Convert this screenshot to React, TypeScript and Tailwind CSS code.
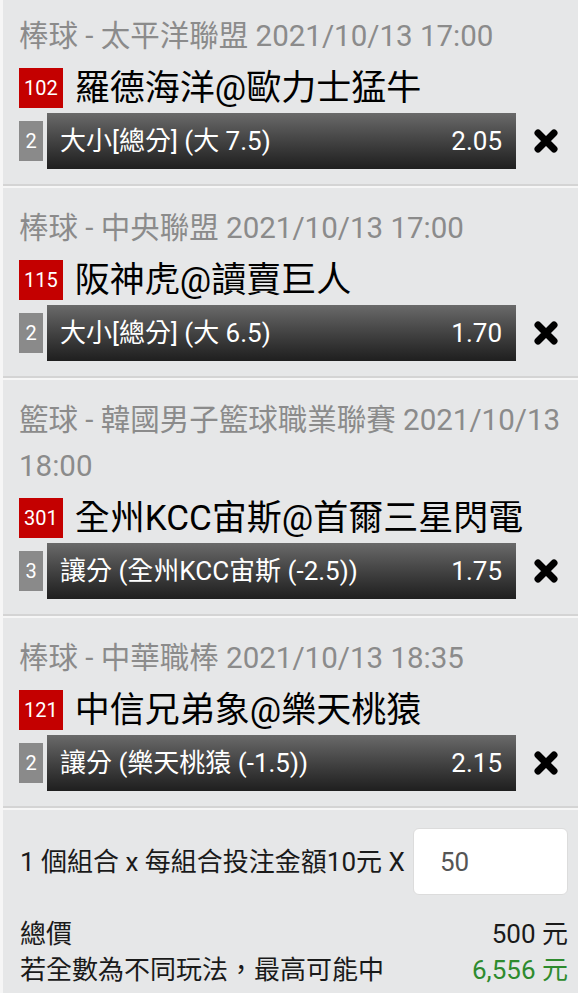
import React from 'react';

type Bet = {
  header: string;
  no: string;
  teams: string;
  leg: string;
  play: string;
  odds: string;
};

const BETS: Bet[] = [
  {
    header: '棒球 - 太平洋聯盟 2021/10/13 17:00',
    no: '102',
    teams: '羅德海洋@歐力士猛牛',
    leg: '2',
    play: '大小[總分] (大 7.5)',
    odds: '2.05',
  },
  {
    header: '棒球 - 中央聯盟 2021/10/13 17:00',
    no: '115',
    teams: '阪神虎@讀賣巨人',
    leg: '2',
    play: '大小[總分] (大 6.5)',
    odds: '1.70',
  },
  {
    header: '籃球 - 韓國男子籃球職業聯賽 2021/10/13 18:00',
    no: '301',
    teams: '全州KCC宙斯@首爾三星閃電',
    leg: '3',
    play: '讓分 (全州KCC宙斯 (-2.5))',
    odds: '1.75',
  },
  {
    header: '棒球 - 中華職棒 2021/10/13 18:35',
    no: '121',
    teams: '中信兄弟象@樂天桃猿',
    leg: '2',
    play: '讓分 (樂天桃猿 (-1.5))',
    odds: '2.15',
  },
];

const CloseIcon = () => (
  <svg width="24" height="24" viewBox="0 0 24 24" className="shrink-0">
    <path d="M4 4 L20 20 M20 4 L4 20" stroke="#000" strokeWidth="7" strokeLinecap="round" />
  </svg>
);

const BetCard = ({ bet }: { bet: Bet }) => (
  <div className="bg-[#e6e7e8] border-b-2 border-[#d4d4d4] mb-[2px] pl-[16px] pr-[10px] pt-[17px] pb-[15px]">
    <div className="text-[29.5px] leading-[46px] text-[#8b8b8b]">{bet.header}</div>
    <div className="mt-[4px] h-[50px] flex items-center">
      <span className="bg-[#c40000] text-white text-[20px] h-[40px] px-[5px] flex items-center leading-none">
        {bet.no}
      </span>
      <span className="ml-[12px] text-[35px] leading-none text-black">{bet.teams}</span>
    </div>
    <div className="flex items-center h-[56px]">
      <span className="w-[24px] h-[40px] bg-[#8a8a8a] text-white text-[20px] flex items-center justify-center leading-none">
        {bet.leg}
      </span>
      <div className="ml-[4px] w-[469px] h-full bg-linear-to-b from-[#6a6a6a] to-[#1f1f1f] flex items-center justify-between pl-[13px] pr-[14px] text-white text-[26px] leading-none">
        <span>{bet.play}</span>
        <span>{bet.odds}</span>
      </div>
      <div className="ml-[18px]">
        <CloseIcon />
      </div>
    </div>
  </div>
);

const App = () => {
  return (
    <div
      className="h-screen overflow-hidden bg-[#f6f6f6] pl-[3px]"
      style={{ fontFamily: "Roboto, 'Noto Sans CJK TC', sans-serif" }}
    >
      <div className="-mt-[4px]">
        {BETS.map((bet) => (
          <BetCard key={bet.no} bet={bet} />
        ))}
      </div>
      <div className="bg-[#e6e7e8] pl-[17px] pr-[10px] pt-[18px] pb-[20px] text-[26px] text-[#1a1a1a]">
        <div className="flex items-center">
          <span className="leading-none">1 個組合 x 每組合投注金額10元 X</span>
          <div className="ml-auto w-[155px] h-[67px] bg-white rounded-[6px] border border-[#dcdcdc] flex items-center pl-[26px] text-[#555] leading-none">
            50
          </div>
        </div>
        <div className="mt-[21px] flex justify-between leading-[36px]">
          <span>總價</span>
          <span>500 元</span>
        </div>
        <div className="flex justify-between leading-[36px]">
          <span>若全數為不同玩法，最高可能中</span>
          <span className="text-[#2e8b2e]">6,556 元</span>
        </div>
      </div>
    </div>
  );
};

export default App;
